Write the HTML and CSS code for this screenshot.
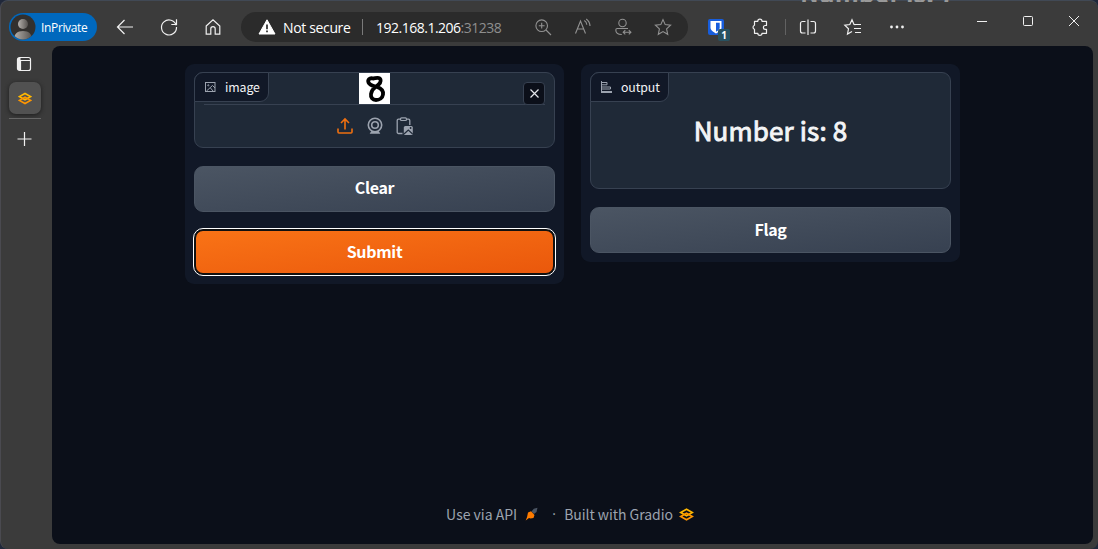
FILE: index.html
```html
<!DOCTYPE html>
<html lang="en">
<head>
<meta charset="utf-8">
<title>Gradio</title>
<link rel="stylesheet" href="styles.css">
</head>
<body>
<svg width="0" height="0" class="defs">
  <symbol id="gradio" viewBox="0 0 20 18">
    <path d="M10 1.800 2 6.300 10 10.800 18 6.300Z" fill="none" stroke="#ffb800" stroke-width="2.300"/>
    <path d="M2 11.700 10 7.200 18 11.700 10 16.200Z" fill="none" stroke="#ff9600" stroke-width="2.300"/>
  </symbol>
</svg>
<div class="window">
  <div class="behind"><span>Number is: 7</span></div>
  <header class="toolbar">
    <div class="profile">
      <svg class="avatar" width="26" height="26" viewBox="0 0 26 26"><defs><linearGradient id="av"><stop offset="0" stop-color="#b4b0ac"/><stop offset="1" stop-color="#55524f"/></linearGradient><clipPath id="ac"><circle cx="13" cy="13" r="12.5"/></clipPath></defs><circle cx="13" cy="13" r="12.500" fill="#32302e"/><g clip-path="url(#ac)" fill="url(#av)"><circle cx="13" cy="10" r="5"/><path d="M4 26c0-6 3-9 9-9s9 3 9 9Z"/></g></svg>
      <span>InPrivate</span>
    </div>
    <svg class="ico" width="20" height="20" viewBox="0 0 20 20"><path d="M18 10H2.500M9.500 3 2.500 10l7 7"/></svg>
    <svg class="ico" width="20" height="20" viewBox="0 0 20 20"><path d="M17.200 8.300A7.500 7.500 0 1 0 17.500 10M17.500 2.300v5.200h-5.200"/></svg>
    <svg class="ico" width="20" height="20" viewBox="0 0 20 20"><path d="M3.200 9 10 2.800 16.800 9v8.200h-4.600v-5.400a2.200 2.200 0 0 0-4.400 0v5.400H3.200Z"/></svg>
    <div class="address">
      <svg width="18" height="16" viewBox="0 0 18 16"><path d="M9 .8 17 15H1Z" fill="#fff" stroke="#fff" stroke-linejoin="round"/><path d="M9 5.500v4.700M9 11.500v1.700" stroke="#2b2b2b" stroke-width="1.700"/></svg>
      <span class="secure">Not secure</span>
      <i class="bar"></i>
      <span class="url">192.168.1.206<span>:31238</span></span>
      <div class="tools">
        <svg class="dim" width="20" height="20" viewBox="0 0 20 20"><circle cx="8.700" cy="8.700" r="5.800"/><path d="m13 13 5 5M5.800 8.700h5.800M8.700 5.800v5.800"/></svg>
        <svg class="dim" width="20" height="20" viewBox="0 0 20 20"><path d="m2.500 16.500 5-12.500 5 12.500M4.300 12h6.500M11.300 3.500c1.600 1 2.400 2.500 2.500 4.300M13.200 2c2.400 1.600 3.600 3.800 3.800 7"/></svg>
        <svg class="dim" width="20" height="20" viewBox="0 0 20 20"><circle cx="9.500" cy="6" r="3.700"/><path d="M15 11.500H4.200a1.400 1.400 0 0 0-1.400 1.400c0 3 2.700 4.600 6 4.600M10.500 15.300h7.200M12.300 13.200l-2.100 2.100 2.100 2.100M15.800 13.200l2.100 2.100-2.100 2.100"/></svg>
        <svg class="dim" width="20" height="20" viewBox="0 0 20 20"><path d="m10 2.600 2.200 5 5.400.6-4 3.700 1.100 5.400-4.700-2.700-4.700 2.700 1.100-5.400-4-3.700 5.400-.6Z"/></svg>
      </div>
    </div>
    <div class="ext">
      <svg width="16" height="16" viewBox="0 0 16 16"><rect width="16" height="16" rx="2" fill="#175ddc"/><path d="M2.500 2h11v6.500c0 2.800-3 4.600-5.500 6-2.500-1.400-5.500-3.200-5.500-6Z" fill="#fff"/><path d="M8 3.700h3.700v5c0 1.700-2 3-3.700 4Z" fill="#175ddc"/></svg>
      <b>1</b>
    </div>
    <svg class="ico puzzle" width="20" height="20" viewBox="0 0 20 20"><path d="M4.500 4.300h3.300a2.100 2.100 0 0 1 4.200 0h4.500v4.200h-1.200a1.900 1.900 0 0 0 0 3.800h1.200v4H12a2.100 2.100 0 0 1-4.200 0H4.500v-4a2.100 2.100 0 0 1 0-4Z" stroke-linejoin="round"/></svg>
    <i class="bar dark"></i>
    <svg class="ico split" width="20" height="20" viewBox="0 0 20 20"><path d="M7.500 4.500h-3a2 2 0 0 0-2 2v7.500a2 2 0 0 0 2 2h3M12.500 4.500h3a2 2 0 0 1 2 2v7.500a2 2 0 0 1-2 2h-3M10 2.500v15.500"/></svg>
    <svg class="ico" width="20" height="20" viewBox="0 0 20 20"><path d="M12.500 7.600 11 7.400 9 2.800 6.800 7.500l-5 .6 3.700 3.700-1 5.200 4.500-2.500M12 7.500h6M11 11.500h7M12 15.500h6"/></svg>
    <svg class="ico solid" width="20" height="20" viewBox="0 0 20 20"><circle cx="4.500" cy="10" r="1.400"/><circle cx="10" cy="10" r="1.400"/><circle cx="15.500" cy="10" r="1.400"/></svg>
    <i></i>
    <svg class="ico win" width="12" height="12" viewBox="0 0 12 12"><path d="M1 6.500h10"/></svg>
    <svg class="ico win" width="12" height="12" viewBox="0 0 12 12"><rect x="1.500" y="1.500" width="9" height="9" rx="1"/></svg>
    <svg class="ico win" width="12" height="12" viewBox="0 0 12 12"><path d="m1 1 10 10M11 1 1 11"/></svg>
  </header>
  <div class="main">
    <nav class="side">
      <svg class="ico" width="16" height="16" viewBox="0 0 16 16"><rect x="1.500" y="1.500" width="13" height="13" rx="2"/><path d="M2 2h2.500v12H2Z" fill="#eee" stroke="none"/><path d="M2 4.500h12M4.500 5v9"/></svg>
      <div class="tab"><svg width="14" height="13"><use href="#gradio"/></svg></div>
      <hr>
      <svg class="ico" width="16" height="16" viewBox="0 0 16 16"><path d="M8.500 1v14M1.500 8h14"/></svg>
    </nav>
    <main class="page">
      <div class="columns">
        <section class="panel">
          <div class="block upload">
            <div class="label"><svg class="gray" width="12" height="12" viewBox="0 0 12 12"><rect x=".5" y="1.500" width="9.500" height="9"/><circle cx="3.300" cy="4.300" r=".6"/><path d="m1.500 10 6-5.500L10 7M5.500 7l2.500 3"/></svg><span>image</span></div>
            <button class="close"><svg width="11" height="11" viewBox="0 0 11 11"><path d="m1.500 1.500 8 8M9.500 1.500l-8 8"/></svg></button>
            <div class="preview">
              <svg width="31" height="31" viewBox="0 0 31 31"><path fill="#fff" d="M0 0h31v31H0z"/><path d="M14 5.500C10.500 4.500 8.500 7 9.500 9.500c1.200 3 5 3.500 8.500 4.500 4 1.200 6.500 4 6 7.500s-3.500 5.500-7 5.500-5.500-2.500-5-6 1.500-5 5-7.500c3.500-2.300 5.500-4 4.500-7S17.500 5 14 5.500Z" fill="none" stroke="#000" stroke-width="3.800"/></svg>
            </div>
            <div class="sources">
              <svg width="18" height="18" viewBox="0 0 18 18" stroke="#f07010"><path d="M9 12.500V2M5 6l4-4 4 4M2 11.500V15q0 1 1 1h12q1 0 1-1v-3.500"/></svg>
              <svg width="18" height="18" viewBox="0 0 18 18" stroke="#9ca3af"><circle cx="9" cy="8" r="6.700"/><circle cx="9" cy="8" r="3.300"/><path d="m5.300 14-1.600 2.700h10.600L12.700 14q-3.700 2-7.400 0Z" fill="#9ca3af" stroke="none"/></svg>
              <svg width="18" height="18" viewBox="0 0 18 18" stroke="#9ca3af"><path d="M6.500 16.500H2.500a1.300 1.300 0 0 1-1.300-1.300V3.500a1.300 1.300 0 0 1 1.300-1.300h2M10.500 2.200h2a1.300 1.300 0 0 1 1.300 1.300V8" stroke-width="1.300"/><rect x="4.500" y=".9" width="6" height="2.600" rx="1" stroke-width="1.200"/><rect x="7.800" y="9" width="9" height="9" rx="1.500" fill="#9ca3af" stroke="none"/><path d="m8 17 4.300-4 4.300 4" stroke="#1f2937" stroke-width="1.200"/><circle cx="14.600" cy="11" r=".9" fill="#1f2937" stroke="none"/></svg>
            </div>
          </div>
          <button class="btn clear">Clear</button>
          <button class="btn primary">Submit</button>
        </section>
        <section class="panel">
          <div class="block output">
            <div class="label"><svg class="gray" width="12" height="12" viewBox="0 0 12 12"><path d="M.5 0v12M.500 1.500h5.500v2.300H.5M.500 6h9v2h-9M.500 10.500h10.500M.500 11.500h10.500"/></svg><span>output</span></div>
            <h2>Number is: 8</h2>
          </div>
          <button class="btn">Flag</button>
        </section>
      </div>
      <footer>
        <span class="api">Use via API</span>
        <svg class="rocket" width="14" height="14" viewBox="0 0 14 14"><path d="M6.500 4.500 8.800 1.800 12.500.7 11.500 5 9 7Z" fill="#4b5563"/><path d="M3 5.500 6 4.300 9.500 8 8.500 11 5.500 11.500 4 11 .7 13.500 2 10.200Z" fill="#ff7c00"/></svg>
        <span class="dot">·</span>
        <span class="built">Built with Gradio</span>
        <svg width="15" height="13"><use href="#gradio"/></svg>
      </footer>
    </main>
  </div>
</div>
</body>
</html>
```
FILE: styles.css
```css
* { box-sizing: border-box; }
body { margin: 0; background: #20283a; overflow: hidden; font-family: "Noto Sans CJK SC", sans-serif; }
.defs { position: absolute; }
.window { width: 1098px; height: 549px; display: flex; flex-direction: column; background: #3b3b3b; border-top: 1px solid #414955; border-left: 1px solid #4a4a50; border-radius: 8px; position: relative; }
.behind { position: absolute; top: -1px; left: 799px; height: 2px; width: 160px; overflow: hidden; color: #999; font-size: 25px; font-weight: 700; line-height: 30px; }
.behind span { display: block; margin-top: -23px; white-space: nowrap; }
.toolbar { flex: 0 0 45px; padding-top: 7px; padding-left: 8px; display: grid; grid-template-columns: 94px 44px 44px 44px 459px 44px 45px 4px 43px 46px 42px 41px 46px 46px 46px; align-items: center; justify-items: center; }
.ico { fill: none; stroke: #f0f0f0; stroke-width: 1.2; }
.solid { fill: #f0f0f0; stroke: none; }
.win { margin-bottom: 12px; stroke-width: 1; }
.puzzle { margin-right: 1px; }
.split { margin-right: 1px; }
.profile { justify-self: start; width: 88px; height: 28px; padding-left: 1px; display: flex; align-items: center; gap: 5px; background: #0068bd; border-radius: 14px; color: #fff; font: 12px "Open Sans", sans-serif; }
.profile span { letter-spacing: -.35px; }
.address { width: 447px; height: 30px; padding: 0 15px 0 17px; display: flex; align-items: center; border-radius: 15px; background: #2b2b2b; color: #fff; font: 14px "Open Sans", sans-serif; }
.secure { width: 68px; margin-left: 7px; letter-spacing: -.35px; white-space: nowrap; }
.bar { width: 1px; height: 16px; background: #7a7a7a; }
.address .bar { margin: 0 13px 0 11px; }
.dark { background: #626262; }
.url { letter-spacing: -.5px; white-space: nowrap; }
.url span { color: #8e8e8e; }
.tools { margin-left: auto; display: flex; gap: 20px; }
.dim { fill: none; stroke: #929292; stroke-width: 1.1; }
.ext { position: relative; width: 16px; height: 16px; display: flex; }
.ext b { position: absolute; left: 10px; top: 10px; width: 12px; height: 12px; border-radius: 2px; background: #285261; color: #fff; font: 700 10px/12px "Open Sans", sans-serif; text-align: center; }
.main { flex: 1; display: flex; padding: 0 5px 5px 0; }
.side { width: 51px; padding-top: 10px; padding-right: 4px; display: flex; flex-direction: column; align-items: center; }
.side .ico { margin-right: 2px; }
.tab { width: 32px; height: 32px; margin-top: 10px; display: flex; align-items: center; justify-content: center; background: #515151; border-radius: 7px; box-shadow: 0 1px 4px #1d1d1d; }
.side hr { width: 32px; height: 1px; margin: 4px 0 12px; border: 0; background: #666; }
.page { flex: 1; display: flex; flex-direction: column; justify-content: space-between; background: #0b0f19; border-radius: 8px; padding: 18px 133px 18px; }
.columns { display: flex; align-items: flex-start; gap: 17px; }
.panel { width: 379px; padding: 8px 9px 9px; display: flex; flex-direction: column; gap: 18px; background: #111827; border-radius: 9px; }
.block { position: relative; background: #1f2937; border: 1px solid #374151; border-radius: 9px; }
.upload { height: 76px; }
.output { height: 117px; display: flex; align-items: center; justify-content: center; }
.output h2 { margin: 0 0 2px; color: #f3f4f6; font-size: 26px; font-weight: 400; letter-spacing: .15px; -webkit-text-stroke: .9px #f3f4f6; line-height: 36px; white-space: nowrap; }
.label { position: absolute; left: -1px; top: -1px; height: 30px; padding: 0 8px 0 10px; display: flex; align-items: center; gap: 8px; border: 1px solid #374151; border-radius: 9px 0 9px 0; background: #111827; color: #f3f4f6; font-size: 12.3px; line-height: 20px; letter-spacing: -.1px; }
.label span { padding-bottom: 1px; }
.gray { fill: none; stroke: #9ca3af; stroke-width: 1; }
.close { position: absolute; right: 9px; top: 9px; width: 22px; height: 23px; padding: 0; display: flex; align-items: center; justify-content: center; background: #0b0f19; border: 1px solid #374151; border-radius: 4px; }
.close svg { fill: none; stroke: #e5e7eb; stroke-width: 1.2; }
.preview { height: 32px; margin: 0 9px; display: flex; justify-content: center; border-bottom: 1px solid #374151; }
.sources { margin-top: 12px; display: flex; justify-content: center; gap: 12px; }
.sources svg { fill: none; stroke-width: 1.6; }
.btn { height: 46px; padding: 0 0 2px; border: 1px solid #4b5563; border-radius: 9px; background: linear-gradient(to bottom right, #4b5563, #374151); color: #fff; font: 700 16px/24px "Noto Sans CJK SC", sans-serif; letter-spacing: -.3px; }
.clear { padding-bottom: 4px; }
.primary { height: 46px; margin-top: -1px; padding: 0 0 2px; border: 2px solid #101010; background: linear-gradient(to bottom right, #f97316, #ea580c); outline: 1px solid #fff; outline-offset: 0; }
footer { height: 24px; margin-left: -5px; display: flex; align-items: center; justify-content: center; color: #9ca3af; font-size: 14px; line-height: 24px; white-space: nowrap; }
.rocket { margin: 0 0 0 8px; }
.dot { width: 4px; margin: 0 8px 0 13px; font-family: "Open Sans", sans-serif; }
.built { margin-right: 6px; letter-spacing: -.05px; }
```
